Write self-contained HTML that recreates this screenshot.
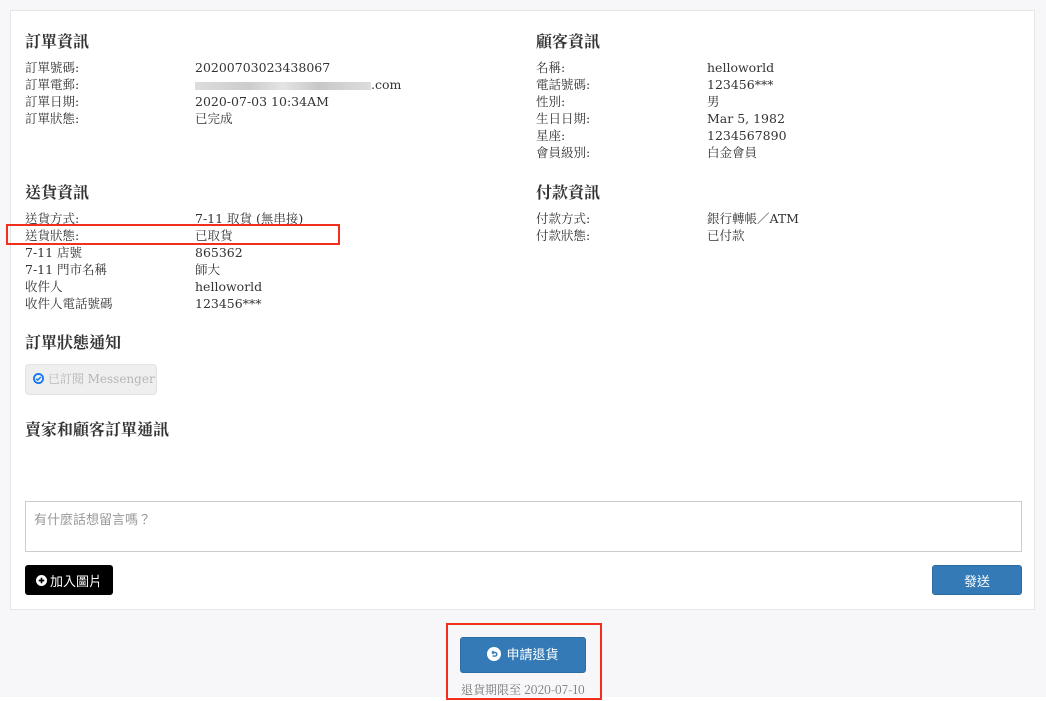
<!DOCTYPE html>
<html><head><meta charset="utf-8"><style>
*{margin:0;padding:0;box-sizing:border-box}
body{width:1046px;height:701px;background:#fff;position:relative;overflow:hidden;font-family:"DejaVu Serif","Noto Serif CJK TC","Noto Serif CJK SC",serif;color:#333;font-size:13px}
.bg{position:absolute;left:0;top:0;width:1046px;height:697px;background:#f7f7f9}
.card{position:absolute;left:10px;top:10px;width:1025px;height:600px;background:#fff;border:1px solid #e6e6e6}
h3{position:absolute;font-size:16px;font-weight:bold;color:#333;white-space:nowrap;line-height:20px;font-family:"Noto Serif CJK TC","Noto Serif CJK SC",serif}
.r{position:absolute;font-size:12.5px;line-height:17px;white-space:nowrap}
.blur{display:inline-block;width:176px;height:8px;background:linear-gradient(90deg,#ddd,#ccc 30%,#e4e4e4 50%,#c8c8c8 70%,#ddd);vertical-align:middle}
.btn{position:absolute;border-radius:3px;color:#fff;font-family:"Noto Sans CJK TC",sans-serif;font-size:13px;display:flex;align-items:center;justify-content:center}
</style></head><body>
<div class="bg"></div>
<div class="card"></div>

<h3 style="left:25px;top:31px">訂單資訊</h3>
<div class="r" style="left:25px;top:59px">訂單號碼:<br>訂單電郵:<br>訂單日期:<br>訂單狀態:</div>
<div class="r" style="left:195px;top:59px">20200703023438067<br><span class="blur"></span>.com<br>2020-07-03 10:34AM<br>已完成</div>

<h3 style="left:536px;top:31px">顧客資訊</h3>
<div class="r" style="left:536px;top:59px">名稱:<br>電話號碼:<br>性別:<br>生日日期:<br>星座:<br>會員級別:</div>
<div class="r" style="left:707px;top:59px">helloworld<br>123456***<br>男<br>Mar 5, 1982<br>1234567890<br>白金會員</div>

<h3 style="left:25px;top:182px">送貨資訊</h3>
<div class="r" style="left:25px;top:210px">送貨方式:<br>送貨狀態:<br>7-11 店號<br>7-11 門市名稱<br>收件人<br>收件人電話號碼</div>
<div class="r" style="left:195px;top:210px">7-11 取貨 (無串接)<br>已取貨<br>865362<br>師大<br>helloworld<br>123456***</div>
<div style="position:absolute;left:6px;top:224px;width:334px;height:21px;border:2px solid #f0301c"></div>

<h3 style="left:536px;top:182px">付款資訊</h3>
<div class="r" style="left:536px;top:210px">付款方式:<br>付款狀態:</div>
<div class="r" style="left:707px;top:210px">銀行轉帳／ATM<br>已付款</div>

<h3 style="left:25px;top:332px">訂單狀態通知</h3>
<div style="position:absolute;left:25px;top:364px;width:132px;height:31px;background:#efefef;border:1px solid #e2e2e2;border-radius:4px;color:#b5b5b5;font-size:12px;line-height:29px;padding-left:7px;white-space:nowrap">
<svg width="11" height="11" viewBox="0 0 12 12" style="vertical-align:-1px"><circle cx="6" cy="6" r="5" fill="none" stroke="#1877f2" stroke-width="2"/><path d="M3.5 6.2l1.7 1.6 3.3-3.4" fill="none" stroke="#1877f2" stroke-width="1.6"/></svg> 已訂閱 Messenger</div>

<h3 style="left:25px;top:419px">賣家和顧客訂單通訊</h3>

<div style="position:absolute;left:25px;top:501px;width:997px;height:51px;border:1px solid #ccc;color:#999;font-size:13px;padding:8px 8px;font-family:'Noto Sans CJK TC',sans-serif;line-height:18px">有什麼話想留言嗎？</div>

<div class="btn" style="left:25px;top:565px;width:88px;height:30px;background:#000"><svg width="11" height="11" viewBox="0 0 12 12" style="margin-right:3px"><circle cx="6" cy="6" r="6" fill="#fff"/><path d="M6 3v6M3 6h6" stroke="#000" stroke-width="1.8"/></svg>加入圖片</div>
<div class="btn" style="left:932px;top:565px;width:90px;height:30px;background:#337ab7;border:1px solid #2e6da4">發送</div>

<div style="position:absolute;left:446px;top:623px;width:156px;height:77px;border:2px solid #f0301c"></div>
<div class="btn" style="left:460px;top:637px;width:126px;height:36px;background:#337ab7;border:1px solid #2e6da4;padding-bottom:3px"><svg width="14" height="14" viewBox="0 0 14 14" style="margin-right:5px"><circle cx="7" cy="7" r="7" fill="#fff"/><path d="M5 5.5h3a1.8 1.8 0 0 1 0 3.6H5.5M5 5.5l1.5-1.5M5 5.5l1.5 1.5" fill="none" stroke="#337ab7" stroke-width="1.4"/></svg>申請退貨</div>
<div class="r" style="left:461px;top:681px;color:#777;font-size:12px;font-family:'Noto Serif CJK TC',serif">退貨期限至 2020-07-10</div>
</body></html>
